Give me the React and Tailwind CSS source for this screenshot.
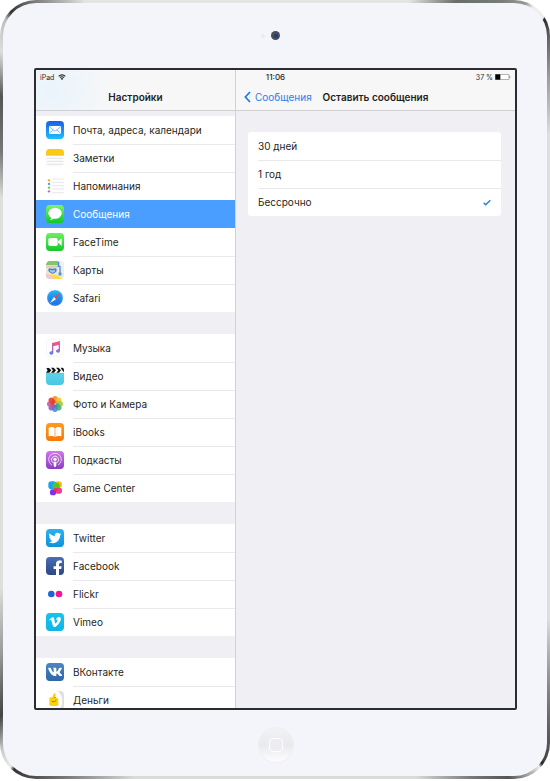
import React, { useState } from 'react';
import { FaTwitter, FaFacebookF, FaVimeoV, FaVk } from 'react-icons/fa';

// Rounded tile used as the base of most app icons
const Tile = ({ id, from, to, children }) => (
  <svg viewBox="0 0 54 54" className="size-[18px] shrink-0" aria-hidden="true">
    <defs>
      <linearGradient id={id} x1="0" y1="0" x2="0" y2="1">
        <stop offset="0" stopColor={from} />
        <stop offset="1" stopColor={to} />
      </linearGradient>
      <clipPath id={`${id}-clip`}>
        <rect width="54" height="54" rx="11" />
      </clipPath>
    </defs>
    <g clipPath={`url(#${id}-clip)`}>
      <rect width="54" height="54" fill={`url(#${id})`} />
      {children}
    </g>
  </svg>
);

const MailIcon = () => (
  <Tile id="mail" from="#1a5fe8" to="#1fc0fb">
    <rect x="9" y="15" width="36" height="24" rx="3" fill="#fff" />
    <path d="M10 17l17 14 17-14M10 37l12-11M44 37L32 26" fill="none" stroke="#3f9df2" strokeWidth="2" />
  </Tile>
);

const NotesIcon = () => (
  <Tile id="notes" from="#ffffff" to="#fbfbfb">
    <rect width="54" height="18" fill="#fcc917" />
    <path d="M0 19h54" stroke="#d9b64a" strokeWidth="2" />
    <path d="M2 28h50M2 37h50M2 46h50" stroke="#d4d4d6" strokeWidth="2" />
  </Tile>
);

const RemindersIcon = () => (
  <Tile id="reminders" from="#ffffff" to="#fdfdfd">
    <path d="M18 6h36M18 16h36M18 26h36M18 36h36M18 47h36" stroke="#dcdcde" strokeWidth="2" />
    <circle cx="9" cy="10" r="3.5" fill="#f5a13a" />
    <circle cx="9" cy="21" r="3.5" fill="#37a5ee" />
    <circle cx="9" cy="32" r="3.5" fill="#6fd04e" />
    <circle cx="9" cy="43" r="3.5" fill="#c06bdc" />
  </Tile>
);

const MessagesIcon = () => (
  <Tile id="messages" from="#7df36a" to="#0fc729">
    <ellipse cx="27" cy="25" rx="20" ry="16.5" fill="#fff" />
    <path d="M16 35c1 5-2 8-5 9 6 1 11-2 14-6z" fill="#fff" />
  </Tile>
);

const FaceTimeIcon = () => (
  <Tile id="facetime" from="#72ee62" to="#12c92b">
    <rect x="7" y="15" width="28" height="24" rx="5" fill="#fff" />
    <path d="M36 25l11-9v22l-11-9z" fill="#fff" />
  </Tile>
);

const MapsIcon = () => (
  <Tile id="maps" from="#f4eee3" to="#efe9dd">
    <path d="M6 0h32v13H0V8z" fill="#86c46c" />
    <path d="M0 15h38v5H0z" fill="#d9cfae" />
    <path d="M38 0h16v24H38z" fill="#f2f0ec" />
    <path d="M0 38c14 2 24 6 34 16H0z" fill="#f3c6ca" />
    <path d="M12 40c12 0 22 4 28 14H24c0-6-6-10-12-10z" fill="#ffdc47" />
    <path d="M22 42c6-3 12 0 18 6l14 6H34z" fill="#ffdc47" />
    <path d="M2 22h34v16H2z" fill="#e8e3d3" />
    <path d="M38 3v5c0 4-1 6-1 8h5v22" fill="none" stroke="#4a90e2" strokeWidth="4" />
    <circle cx="42" cy="39" r="5" fill="#4a90e2" />
    <path d="M9 22c5 2 16 2 21 0 4 5 3 13-10 16C7 35 5 27 9 22z" fill="#4383d2" />
    <path d="M12 27c4 2 11 2 15 0 2 4-2 7-7 8-6-1-10-4-8-8z" fill="#a9cbf0" />
  </Tile>
);

const SafariIcon = () => (
  <svg viewBox="0 0 54 54" className="size-[18px] shrink-0" aria-hidden="true">
    <defs>
      <linearGradient id="safari" x1="0" y1="0" x2="0" y2="1">
        <stop offset="0" stopColor="#22b4f8" />
        <stop offset="1" stopColor="#1c68e6" />
      </linearGradient>
    </defs>
    <circle cx="27" cy="27" r="24" fill="url(#safari)" stroke="#e3edf5" strokeWidth="1" />
    <circle cx="27" cy="27" r="20" fill="none" stroke="#6dbdf8" strokeWidth="2" strokeDasharray="1 3" />
    <path d="M42 12L30 31l-6-7z" fill="#f0433c" />
    <path d="M12 42l12-18 6 7z" fill="#fff" />
  </svg>
);

const MusicIcon = () => (
  <svg viewBox="0 0 54 54" className="size-[18px] shrink-0" aria-hidden="true">
    <defs>
      <linearGradient id="music" x1="0" y1="0" x2="0" y2="1">
        <stop offset="0" stopColor="#fb5c68" />
        <stop offset="0.5" stopColor="#c65bc4" />
        <stop offset="1" stopColor="#4a8df0" />
      </linearGradient>
    </defs>
    <rect x="1" y="1" width="52" height="52" rx="11" fill="#fff" stroke="#f0f0f2" strokeWidth="2" />
    <path
      d="M18 12l24-6v29c0 4-3 6-6 6s-6-2-6-4c0-5 4-6 8-7V18l-16 4v19c0 4-3 6-6 6s-6-2-6-4c0-5 4-6 8-7z"
      fill="url(#music)"
    />
  </svg>
);

const VideoIcon = () => (
  <Tile id="video" from="#63dde9" to="#4cc4e4">
    <rect width="54" height="19" fill="#fff" />
    <path d="M0 3h9l7 7-6 7H0l5-7zM15 2h8l7 8-6 7h-9l6-7zM30 2h8l7 8-6 7h-8l6-7zM44 2h10v14l-6-7z" fill="#111" />
    <path d="M0 19h54" stroke="#3fb4c8" strokeWidth="2" />
  </Tile>
);

const petals = ['#f58a1f', '#efc61e', '#9cc93a', '#3fae78', '#4389d2', '#7a62b8', '#c25396', '#ea3528'];

const PhotosIcon = () => (
  <svg viewBox="0 0 54 54" className="size-[18px] shrink-0" aria-hidden="true">
    {petals.map((color, i) => (
      <rect
        key={color}
        x="19"
        y="3"
        width="16"
        height="23"
        rx="8"
        fill={color}
        fillOpacity="0.88"
        transform={`rotate(${i * 45} 27 27)`}
      />
    ))}
    <circle cx="27" cy="27" r="2" fill="#f6dfb5" />
  </svg>
);

const BooksIcon = () => (
  <Tile id="books" from="#ff9c1a" to="#f9780c">
    <path d="M26 16c-4-5-12-5-18-2v26c6-2 14-2 18 2zM28 16c4-5 12-5 18-2v26c-6-2-14-2-18 2z" fill="#fff" />
  </Tile>
);

const PodcastsIcon = () => (
  <Tile id="podcasts" from="#cf78e6" to="#8a3cc4">
    <g fill="none" stroke="#fff" strokeWidth="3" strokeLinecap="round">
      <path d="M17 42a19 19 0 1 1 20 0" strokeOpacity="0.7" />
      <path d="M19 34a11 11 0 1 1 16 0" strokeOpacity="0.85" />
    </g>
    <circle cx="27" cy="25" r="5" fill="#fff" />
    <path d="M22 32h10l-2 15h-6z" fill="#fff" />
  </Tile>
);

const GameCenterIcon = () => (
  <svg viewBox="0 0 54 54" className="size-[18px] shrink-0" aria-hidden="true">
    <rect x="26" y="7" width="22" height="20" rx="9" fill="#f6c21c" />
    <rect x="7" y="7" width="24" height="24" rx="9" fill="#1ea0f2" />
    <rect x="20" y="11" width="21" height="21" rx="8" fill="#52c81f" />
    <rect x="26" y="26" width="22" height="18" rx="8" fill="#f5398b" />
    <rect x="12" y="31" width="18" height="18" rx="8" fill="#7b2ff2" />
    <path d="M24 28h10v8H24z" fill="#e8345e" />
  </svg>
);

const TwitterIcon = () => (
  <Tile id="twitter" from="#2cb0ee" to="#0d93dc">
    <FaTwitter x="8" y="8" size="38" color="#fff" />
  </Tile>
);

const FacebookIcon = () => (
  <Tile id="facebook" from="#4a6db5" to="#2c4886">
    <FaFacebookF x="12" y="10" size="46" color="#fff" />
  </Tile>
);

const FlickrIcon = () => (
  <svg viewBox="0 0 54 54" className="size-[18px] shrink-0" aria-hidden="true">
    <circle cx="16" cy="27" r="10" fill="#1d66d8" />
    <circle cx="39" cy="27" r="10" fill="#f7158a" />
  </svg>
);

const VimeoIcon = () => (
  <Tile id="vimeo" from="#16c3ee" to="#10b5e4">
    <FaVimeoV x="7" y="7" size="40" color="#fff" />
  </Tile>
);

const VkIcon = () => (
  <Tile id="vk" from="#4a86c6" to="#2f66a6">
    <FaVk x="5" y="4" size="45" color="#fff" />
  </Tile>
);

const MoneyIcon = () => (
  <Tile id="money" from="#ffffff" to="#fbfbfb">
    <path d="M30 0h24v54H36c12-12 14-36-6-54z" fill="#dfdfe6" />
    <path d="M32 2c16 12 18 34 6 52" fill="none" stroke="#fff" strokeWidth="6" />
    <path d="M10 20l9-2 5-11c3-1 5 1 5 4l-1 7 9 6v18l-4 3H14l-4-4z" fill="#fbd10d" />
    <path d="M17 30c5 4 9 3 14-3" fill="none" stroke="#a87a12" strokeWidth="3" />
    <circle cx="27" cy="20" r="2" fill="#a87a12" />
  </Tile>
);

const groups = [
  [
    { name: 'Почта, адреса, календари', Icon: MailIcon },
    { name: 'Заметки', Icon: NotesIcon },
    { name: 'Напоминания', Icon: RemindersIcon },
    { name: 'Сообщения', Icon: MessagesIcon },
    { name: 'FaceTime', Icon: FaceTimeIcon },
    { name: 'Карты', Icon: MapsIcon },
    { name: 'Safari', Icon: SafariIcon },
  ],
  [
    { name: 'Музыка', Icon: MusicIcon },
    { name: 'Видео', Icon: VideoIcon },
    { name: 'Фото и Камера', Icon: PhotosIcon },
    { name: 'iBooks', Icon: BooksIcon },
    { name: 'Подкасты', Icon: PodcastsIcon },
    { name: 'Game Center', Icon: GameCenterIcon },
  ],
  [
    { name: 'Twitter', Icon: TwitterIcon },
    { name: 'Facebook', Icon: FacebookIcon },
    { name: 'Flickr', Icon: FlickrIcon },
    { name: 'Vimeo', Icon: VimeoIcon },
  ],
  [
    { name: 'ВКонтакте', Icon: VkIcon },
    { name: 'Деньги', Icon: MoneyIcon },
  ],
];

const options = ['30 дней', '1 год', 'Бессрочно'];

const StatusBar = () => (
  <div className="absolute inset-x-0 top-0 grid h-[14px] grid-cols-3 items-center px-1 text-[7px] leading-none text-[#2a2a2c]">
    <div className="flex items-center gap-1">
      <span>iPad</span>
      <svg viewBox="0 0 24 18" className="h-[6px] w-2" aria-hidden="true">
        <path d="M2 7a14 14 0 0 1 20 0M6 11a8 8 0 0 1 12 0" fill="none" stroke="#2a2a2c" strokeWidth="3.4" />
        <path d="M12 18l-4-4a6 6 0 0 1 8 0z" fill="#2a2a2c" />
      </svg>
    </div>
    <span className="text-center text-[8px] font-medium">11:06</span>
    <div className="flex items-center justify-end gap-[2px]">
      <span>37 %</span>
      <svg viewBox="0 0 48 18" className="h-[6px] w-4" aria-hidden="true">
        <rect x="1" y="1" width="41" height="16" rx="2" fill="#fff" stroke="#777" strokeWidth="2" />
        <rect x="1" y="1" width="15" height="16" fill="#000" />
        <path d="M44 6c3 1 3 5 0 6z" fill="#555" />
      </svg>
    </div>
  </div>
);

const Sidebar = ({ current, onSelect }) => (
  <aside className="flex w-[200px] shrink-0 flex-col border-r border-[#d0d0d5]">
    <header className="flex h-[41px] shrink-0 items-center justify-center border-b border-[#d0d0d4] bg-[#f7f7f8] bg-[radial-gradient(circle_at_16px_20px,#e9f4fb,#f7f7f8_60px)] pt-[13px]">
      <h1 className="text-[10px] leading-4 font-semibold">Настройки</h1>
    </header>
    <nav className="flex min-h-0 flex-1 flex-col gap-[22px] overflow-hidden pt-[5px]">
      {groups.map((group, i) => (
        <ul key={i} className="shrink-0 bg-white">
          {group.map(({ name, Icon }, index) => {
            const active = name === current;
            const next = group[index + 1];
            // No separator next to the highlighted row or under the last one
            const separator = !active && next && next.name !== current;
            return (
              <li key={name}>
                <a
                  href="#"
                  onClick={() => onSelect(name)}
                  className={`flex h-7 items-center gap-[9px] pl-[10px] ${active ? 'bg-[#4a9eff] text-white' : ''}`}
                >
                  <Icon />
                  <span className={`flex h-7 flex-1 items-center ${separator ? 'shadow-[0_1px_#e9e9ed]' : ''}`}>
                    {name}
                  </span>
                </a>
              </li>
            );
          })}
        </ul>
      ))}
    </nav>
  </aside>
);

const KeepMessages = ({ value, onChange }) => (
  <main className="flex min-w-0 flex-1 flex-col">
    <header className="grid h-[41px] shrink-0 grid-cols-[1fr_auto_1fr] items-center border-b border-[#d0d0d4] bg-[#f7f7f8] pt-[13px]">
      <a href="#" className="flex items-center gap-1 pl-2 leading-4 text-[#2f7fe4]">
        <svg viewBox="0 0 21 36" className="h-3 w-[7px]" aria-hidden="true">
          <path d="M18 3L4 18l14 15" fill="none" stroke="#1878f0" strokeWidth="5" />
        </svg>
        Сообщения
      </a>
      <h2 id="keep-title" className="text-[10px] leading-4 font-semibold whitespace-nowrap">
        Оставить сообщения
      </h2>
    </header>
    <div
      role="radiogroup"
      aria-labelledby="keep-title"
      className="mt-[21px] mr-[14px] ml-3 rounded-[3px] bg-white pl-[10px]"
    >
      {options.map((option, index) => (
        <label
          key={option}
          className={`flex h-7 items-center justify-between pr-[10px] ${
            index === options.length - 1 ? '' : 'shadow-[0_1px_#e9e9ed]'
          }`}
        >
          {option}
          <span className="relative h-[7px] w-2">
            <input
              type="radio"
              name="keep"
              className="absolute inset-0 appearance-none"
              checked={value === option}
              onChange={() => onChange(option)}
            />
            {value === option && (
              <svg viewBox="0 0 24 20" className="h-[7px] w-2" aria-hidden="true">
                <path d="M2 11l6 6L22 3" fill="none" stroke="#2a7be0" strokeWidth="4" />
              </svg>
            )}
          </span>
        </label>
      ))}
    </div>
  </main>
);

const App = () => {
  const [current, setCurrent] = useState('Сообщения');
  const [keep, setKeep] = useState('Бессрочно');

  return (
    <div className="h-screen bg-white pb-[2px] font-['Inter','Liberation_Sans',sans-serif] text-[10px] text-[#1f1f21]">
      {/* Metal edge of the tablet */}
      <div className="h-full rounded-[36px] bg-[conic-gradient(#e2e5e2_0deg,#e2e5e2_19deg,#6a6e6a_25deg,#777b77_30deg,#999_33deg,#eee_34deg,#eee_35.8deg,#2a2a2a_36deg,#666_38deg,#999_41deg,#dcdfdc_47deg,#dcdfdc_130deg,#777_139deg,#444_144deg,#222_144.5deg,#eee_145deg,#bbb_146deg,#555_149deg,#777_153deg,#d8dbd8_160deg,#d8dbd8_200deg,#666_210deg,#333_214.5deg,#eee_215deg,#ccc_217deg,#444_220deg,#999_226deg,#dcdfdc_234deg,#dcdfdc_305deg,#777_311deg,#555_317deg,#ddd_321deg,#bbb_324deg,#333_325deg,#777_328deg,#e2e5e2_334deg,#e2e5e2_360deg)] p-[3px]">
        <div className="flex h-full flex-col rounded-[33px] bg-[#f4f5fa] pr-[30px] pl-[31px]">
          <div className="flex h-[65px] shrink-0 items-center justify-center gap-[6px] pr-[10px]">
            <span className="size-1 rounded-full bg-[#e9eaee]" />
            <span className="flex size-[9px] items-center justify-center rounded-full bg-[#4a4d55]">
              <span className="size-1 rounded-full bg-[#173f86]" />
            </span>
          </div>
          <div className="relative flex min-h-0 flex-1 overflow-hidden rounded-[2px] border-2 border-[#2d2d31] bg-[#efeff4]">
            <Sidebar current={current} onSelect={setCurrent} />
            <KeepMessages value={keep} onChange={setKeep} />
            <StatusBar />
          </div>
          <div className="flex h-[66px] shrink-0 items-center justify-center pt-1">
            <button
              type="button"
              aria-label="Домой"
              className="flex size-9 items-center justify-center rounded-full border border-[#eeeff2] bg-linear-to-b from-[#f3f3f6] via-[#e9eaee] via-50% to-[#fdfdfe]"
            >
              <span className="size-[14px] rounded-[4px] border border-white bg-[#ededf1]" />
            </button>
          </div>
        </div>
      </div>
    </div>
  );
};

export default App;
